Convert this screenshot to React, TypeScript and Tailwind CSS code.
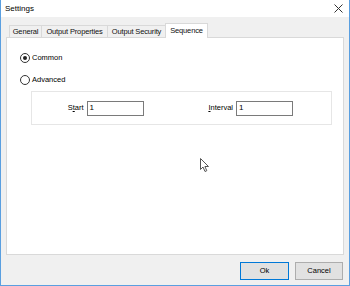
import React from "react"

const font = { fontFamily: '"Liberation Sans", Arial, sans-serif' }

function Radio({ checked, label }: { checked?: boolean; label: string }) {
  return (
    <div className="flex items-center gap-[2px] h-[12px]">
      <span className="w-[10px] h-[10px] rounded-full border border-[#333] bg-white flex items-center justify-center">
        {checked && <span className="w-[4px] h-[4px] rounded-full bg-[#222]" />}
      </span>
      <span className="text-[7.5px] text-black leading-none">{label}</span>
    </div>
  )
}

function Field({ label }: { label: React.ReactNode }) {
  return (
    <div className="flex items-center justify-end gap-[3px] pr-[38px]">
      <span className="text-[7.5px] text-black leading-none">{label}</span>
      <div className="w-[57px] h-[15px] border border-[#7a7a7a] bg-white flex items-center px-[2px] text-[8px] leading-none">1</div>
    </div>
  )
}

export default function App() {
  const tabs = [
    { label: "General", w: "w-[32px]" },
    { label: "Output Properties", w: "w-[66px]" },
    { label: "Output Security", w: "w-[58px]" },
  ]
  return (
    <div className="w-[350px] h-[286px] flex flex-col bg-[#f0f0f0] border-l border-r border-b border-[#5a9fe0] select-none" style={font}>
      {/* Title bar */}
      <div className="h-[17px] bg-white flex items-center justify-between pl-[4px] pr-[6px]">
        <span className="text-[8px] text-black leading-none">Settings</span>
        <svg width="9" height="9" viewBox="0 0 9 9">
          <path d="M0.5 0.5 L8.5 8.5 M8.5 0.5 L0.5 8.5" stroke="#333" strokeWidth="1" />
        </svg>
      </div>

      {/* Body */}
      <div className="flex-1 flex flex-col px-[5px] pt-[6px]">
        {/* Tabs */}
        <div className="flex items-end pl-[3px] h-[14px]">
          {tabs.map((t) => (
            <div key={t.label} className={`${t.w} h-[12px] flex items-center justify-center border-t border-l border-[#d9d9d9] bg-[#f0f0f0] text-[7.5px] tracking-[-0.15px] text-[#111] leading-none whitespace-nowrap`}>
              {t.label}
            </div>
          ))}
          <div className="w-[43px] h-[15px] flex items-center justify-center border-t border-l border-r border-[#d9d9d9] bg-white text-[7.5px] tracking-[-0.15px] text-[#111] leading-none -mb-[1px] relative z-10">
            Sequence
          </div>
        </div>

        {/* Panel */}
        <div className="h-[218px] bg-white border border-[#d9d9d9] relative flex flex-col pl-[13px] pt-[14px] pr-[11px]">
          <Radio checked label="Common" />
          <div className="mt-[10px]">
            <Radio label="Advanced" />
          </div>
          <div className="mt-[5px] ml-[11px] h-[34px] border border-[#e6e6e6] grid grid-cols-2 items-center">
            <Field label={<>S<u>t</u>art</>} />
            <Field label={<><u>I</u>nterval</>} />
          </div>

          {/* Mouse pointer */}
          <svg className="absolute left-[193px] top-[120px]" width="10" height="15" viewBox="0 0 10 15">
            <path d="M0.5 0.5 L0.5 11.5 L3 9 L5 13.5 L6.8 12.7 L4.9 8.5 L8.5 8.5 Z" fill="white" stroke="#555" strokeWidth="1" strokeLinejoin="round" />
          </svg>
        </div>

        {/* Footer */}
        <div className="flex-1 flex items-center justify-end gap-[6px] pr-[1px] pt-[2px]">
          <button className="w-[49px] h-[18px] bg-[#e1e1e1] border border-[#0078d7] text-[7.5px] text-black leading-none">Ok</button>
          <button className="w-[48px] h-[18px] bg-[#e1e1e1] border border-[#adadad] text-[7.5px] text-black leading-none">Cancel</button>
        </div>
      </div>
    </div>
  )
}
